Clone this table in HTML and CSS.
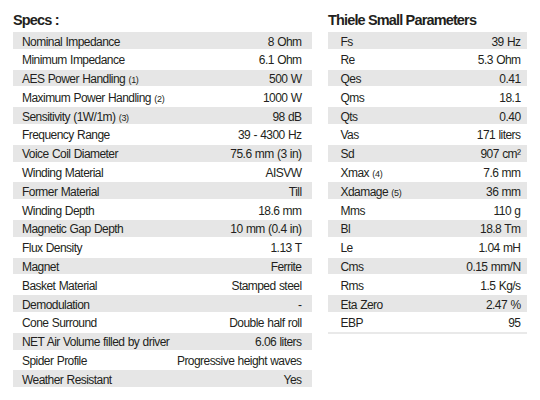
FILE: index.html
```html
<!DOCTYPE html>
<html>
<head>
<meta charset="utf-8">
<link rel="stylesheet" href="styles.css">
</head>
<body>
<div class="page">
  <section class="col col-specs">
    <h2 class="title">Specs :</h2>
    <div class="table">
      <div class="row"><span>Nominal Impedance</span><span>8 Ohm</span></div>
      <div class="row"><span>Minimum Impedance</span><span>6.1 Ohm</span></div>
      <div class="row"><span>AES Power Handling <small>(1)</small></span><span>500 W</span></div>
      <div class="row"><span>Maximum Power Handling <small>(2)</small></span><span>1000 W</span></div>
      <div class="row"><span>Sensitivity (1W/1m) <small>(3)</small></span><span>98 dB</span></div>
      <div class="row"><span>Frequency Range</span><span>39 - 4300 Hz</span></div>
      <div class="row"><span>Voice Coil Diameter</span><span>75.6 mm (3 in)</span></div>
      <div class="row"><span>Winding Material</span><span>AISVW</span></div>
      <div class="row"><span>Former Material</span><span>Till</span></div>
      <div class="row"><span>Winding Depth</span><span>18.6 mm</span></div>
      <div class="row"><span>Magnetic Gap Depth</span><span>10 mm (0.4 in)</span></div>
      <div class="row"><span>Flux Density</span><span>1.13 T</span></div>
      <div class="row"><span>Magnet</span><span>Ferrite</span></div>
      <div class="row"><span>Basket Material</span><span>Stamped steel</span></div>
      <div class="row"><span>Demodulation</span><span>-</span></div>
      <div class="row"><span>Cone Surround</span><span>Double half roll</span></div>
      <div class="row"><span>NET Air Volume filled by driver</span><span>6.06 liters</span></div>
      <div class="row"><span>Spider Profile</span><span>Progressive height waves</span></div>
      <div class="row"><span>Weather Resistant</span><span>Yes</span></div>
    </div>
  </section>
  <section class="col col-ts">
    <h2 class="title">Thiele Small Parameters</h2>
    <div class="table table-ts">
      <div class="row"><span>Fs</span><span>39 Hz</span></div>
      <div class="row"><span>Re</span><span>5.3 Ohm</span></div>
      <div class="row"><span>Qes</span><span>0.41</span></div>
      <div class="row"><span>Qms</span><span>18.1</span></div>
      <div class="row"><span>Qts</span><span>0.40</span></div>
      <div class="row"><span>Vas</span><span>171 liters</span></div>
      <div class="row"><span>Sd</span><span>907 cm²</span></div>
      <div class="row"><span>Xmax <small>(4)</small></span><span>7.6 mm</span></div>
      <div class="row"><span>Xdamage <small>(5)</small></span><span>36 mm</span></div>
      <div class="row"><span>Mms</span><span>110 g</span></div>
      <div class="row"><span>Bl</span><span>18.8 Tm</span></div>
      <div class="row"><span>Le</span><span>1.04 mH</span></div>
      <div class="row"><span>Cms</span><span>0.15 mm/N</span></div>
      <div class="row"><span>Rms</span><span>1.5 Kg/s</span></div>
      <div class="row"><span>Eta Zero</span><span>2.47 %</span></div>
      <div class="row"><span>EBP</span><span>95</span></div>
    </div>
  </section>
</div>
</body>
</html>
```

FILE: styles.css
```css
html, body {
  margin: 0;
  padding: 0;
  background: #ffffff;
}
body {
  font-family: "Liberation Sans", Arial, sans-serif;
  color: #231f20;
}
.page {
  display: flex;
  gap: 16px;
  padding-left: 13px;
}
.col-specs { width: 299px; }
.col-ts { width: 199px; }
.title {
  margin: 0;
  padding-top: 11px;
  height: 18px;
  line-height: 18px;
  margin-bottom: 2px;
  font-size: 14.5px;
  font-weight: bold;
  letter-spacing: -0.85px;
}
.table {
  display: flex;
  flex-direction: column;
}
.row {
  display: flex;
  justify-content: space-between;
  box-sizing: border-box;
  height: 18.8px;
  line-height: 17px;
  padding: 1.5px 10.5px 0 9px;
  font-size: 12px;
  letter-spacing: -0.55px;
  word-spacing: 0.5px;
  white-space: nowrap;
  border-top: 0.75px solid transparent;
  border-bottom: 0.75px solid transparent;
  background-clip: padding-box;
}
.row:nth-child(odd) {
  background-color: #e6e6e6;
}
.row small {
  font-size: 9px;
  letter-spacing: -0.3px;
}
.table-ts .row {
  padding-left: 12.5px;
  padding-right: 6.5px;
}
.table-ts {
  border-bottom: 2px solid #e9e9e9;
}
```
